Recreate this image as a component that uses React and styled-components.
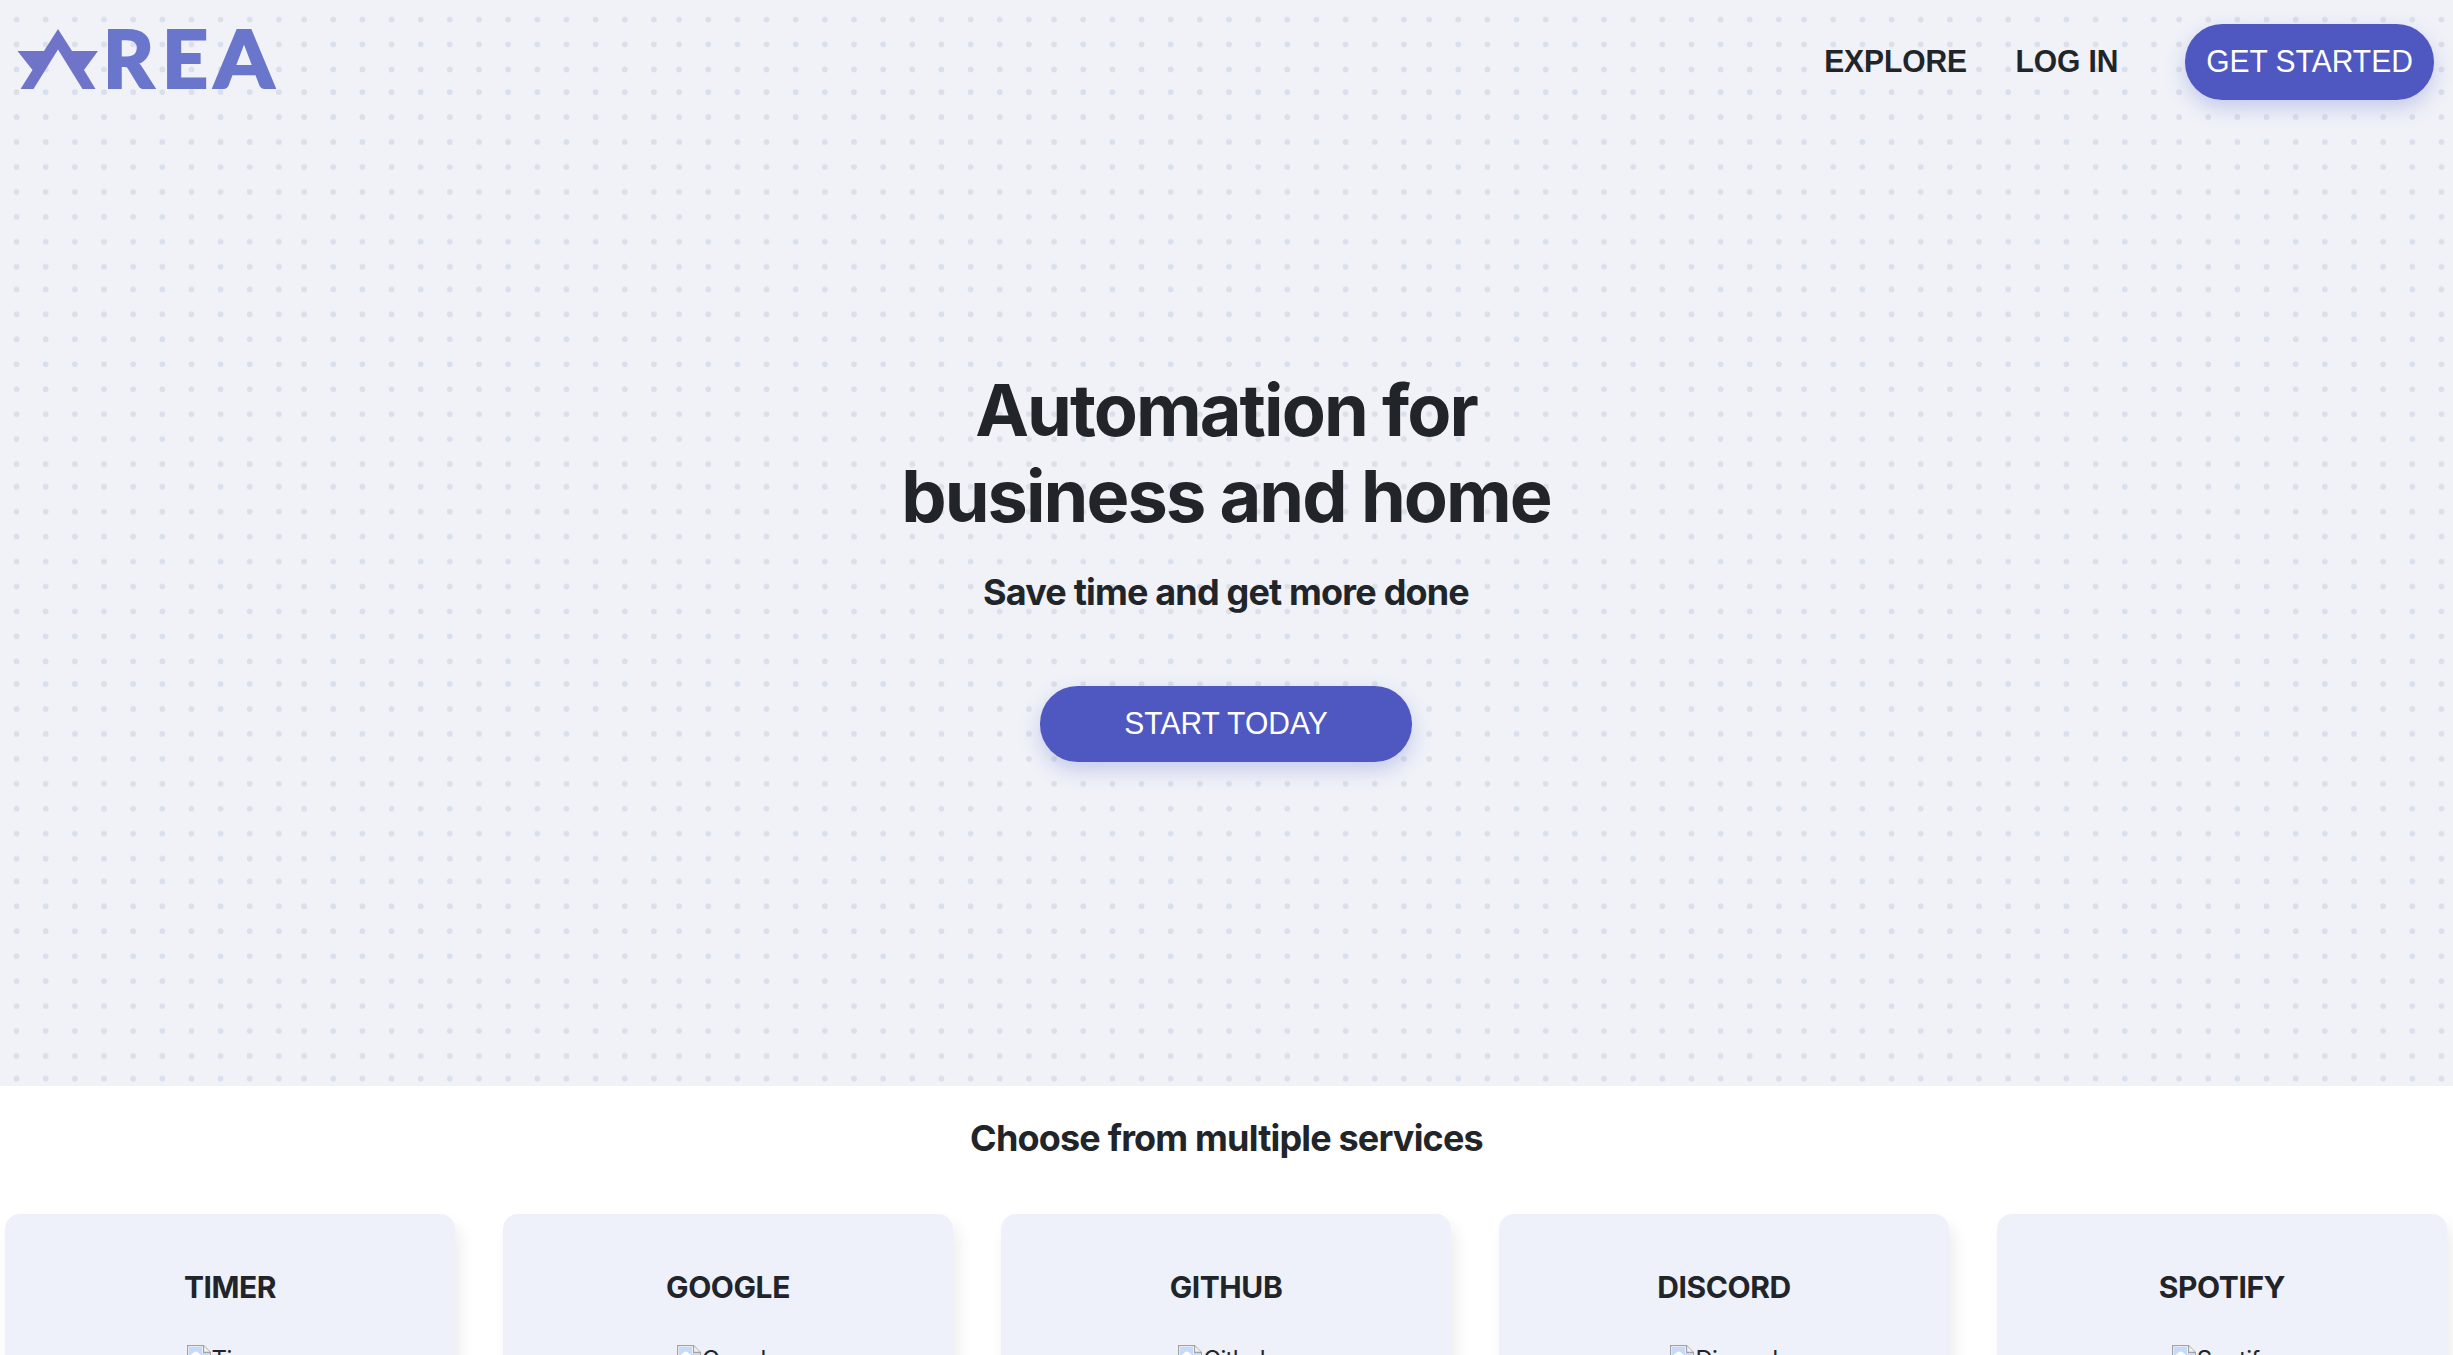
import React from 'react';
import styled, { createGlobalStyle } from 'styled-components';

const GlobalStyle = createGlobalStyle`
  *, *::before, *::after { box-sizing: border-box; }
  html, body { margin: 0; padding: 0; background: #fff; overflow: hidden; }
  body { color: #212529; font-family: Inter, "Liberation Sans", sans-serif; }
  h1, h2, h3 { margin: 0; }
`;

const Page = styled.div`
  height: 1355px;
  overflow: hidden;
  display: flex;
  flex-direction: column;
`;

const Hero = styled.section`
  position: relative;
  flex: 0 0 1086px;
  display: flex;
  flex-direction: column;
  background: #f0f2f8;
`;

const Backdrop = styled.svg`
  position: absolute;
  inset: 0;
  width: 100%;
  height: 100%;
`;

const Header = styled.header`
  position: relative;
  height: 124px;
  padding: 0 19px 0 17px;
  display: flex;
  align-items: center;
  justify-content: space-between;
`;

const Logo = styled.svg`
  width: 262px;
  height: 80px;
  overflow: visible;
  font: 900 80px Lato, sans-serif;
`;

const Nav = styled.nav`
  display: flex;
  align-items: center;
`;

const Label = styled.span`
  display: inline-block;
  transform: scaleY(1.06);
  transform-origin: 50% 78%;
`;

const NavLink = styled.a`
  font: 700 30px/36px "Liberation Sans", Arial, sans-serif;
  letter-spacing: -0.1px;
  color: #212529;
  margin-right: ${({ $gap }) => $gap}px;
`;

const PillButton = styled.button`
  width: ${({ $width }) => $width}px;
  height: 76px;
  padding: 0 0 1px;
  border: 0;
  border-radius: 37.5px;
  background: #4e58c0;
  color: #fff;
  font: 400 30px "Liberation Sans", Arial, sans-serif;
  white-space: nowrap;
  box-shadow: 0 8px 20px rgba(78, 88, 192, 0.26);
`;

const HeroContent = styled.div`
  position: relative;
  padding: 242.7px 1px 0 0;
  display: flex;
  flex-direction: column;
  align-items: center;
`;

const HeroTitle = styled.h1`
  font-size: 72px;
  font-weight: 700;
  letter-spacing: -0.0265em;
  line-height: 86.6px;
  text-align: center;
`;

const Subtitle = styled.h2`
  font-size: 36px;
  font-weight: 700;
  letter-spacing: -0.023em;
  line-height: 43.2px;
  text-align: center;
`;

const Tagline = styled(Subtitle)`
  margin: 31.5px 0 71.6px;
`;

const Services = styled.section`
  padding: 31px 5px 0;
`;

const CardRow = styled.div`
  display: flex;
  gap: 48px;
  margin-top: 53.8px;
`;

const Card = styled.article`
  flex: 0 0 450px;
  height: 420px;
  padding-top: 55px;
  border-radius: 15px;
  background: #eef1fa;
  box-shadow: 5px 10px 16px rgba(0, 0, 0, 0.08);
  display: flex;
  flex-direction: column;
  align-items: center;
`;

const CardTitle = styled.h3`
  font-size: 30px;
  font-weight: 700;
  letter-spacing: -0.014em;
  line-height: 36px;
`;

const MissingImage = styled.div`
  display: flex;
  align-items: flex-start;
  gap: 1px;
  margin-top: 40px;
  font-size: 24px;
  letter-spacing: -0.03em;
  line-height: 29px;
`;

const TILE = { width: 375, height: 197.3, columns: 13, rows: 8 };

const Dots = () => (
  <Backdrop aria-hidden="true">
    <defs>
      <pattern id="dots" x="-84" y="-117.3" width={TILE.width} height={TILE.height} patternUnits="userSpaceOnUse">
        {Array.from({ length: TILE.rows * TILE.columns }, (_, i) => {
          const column = i % TILE.columns;
          const row = Math.floor(i / TILE.columns);
          return (
            <circle
              key={i}
              cx={13.1 + column * 29.15}
              cy={12.1 + row * 24.95}
              r="2.85"
              fill={(row + column) % 3 ? '#dae0eb' : '#dcdee9'}
            />
          );
        })}
      </pattern>
    </defs>
    <rect width="100%" height="100%" fill="url(#dots)" />
  </Backdrop>
);

const AreaLogo = () => (
  <Logo viewBox="17 22 262 80" role="img" aria-label="AREA">
    <polygon
      fill="#6f74c9"
      points="58,29 72,51 98,51 84,70 95.5,89 82.5,89 58,49.5 33.5,89 20.5,89 32.5,70 17.5,51 44,51"
    />
    <g fill="#6a76cb" stroke="#6a76cb" strokeWidth="2">
      <text x="103" y="87.8" textLength="51" lengthAdjust="spacingAndGlyphs">R</text>
      <text x="162" y="87.8" textLength="46" lengthAdjust="spacingAndGlyphs">E</text>
      <text x="214" y="87.8" textLength="60" lengthAdjust="spacingAndGlyphs">A</text>
    </g>
  </Logo>
);

const BrokenImageIcon = () => (
  <svg width="24" height="24" viewBox="0 0 24 24" aria-hidden="true">
    <path d="M.6.6H16.5L23.4 7.5V23.4H.6Z" fill="#fff" stroke="#a3a3a3" strokeWidth="1.3" />
    <path d="M2 2H15V8.5H22V22H2Z" fill="#c6dafc" />
    <path d="M4 10.5a2 2 0 0 1 1.8-2 3.2 3.2 0 0 1 6 0 2 2 0 0 1 2 2Z" fill="#fff" />
    <path d="M16.5.6V7.5H23.4" fill="#f2f2f2" stroke="#a3a3a3" strokeWidth="1.3" />
  </svg>
);

const services = ['Timer', 'Google', 'Github', 'Discord', 'Spotify'];

export default function App() {
  return (
    <>
      <GlobalStyle />
      <Page>
        <Hero>
          <Dots />
          <Header>
            <AreaLogo />
            <Nav>
              <NavLink $gap={48.6}><Label>EXPLORE</Label></NavLink>
              <NavLink $gap={66.8}><Label>LOG IN</Label></NavLink>
              <PillButton $width={249}><Label>GET STARTED</Label></PillButton>
            </Nav>
          </Header>
          <HeroContent>
            <HeroTitle>
              Automation for
              <br />
              business and home
            </HeroTitle>
            <Tagline>Save time and get more done</Tagline>
            <PillButton $width={372}><Label>START TODAY</Label></PillButton>
          </HeroContent>
        </Hero>
        <Services>
          <Subtitle>Choose from multiple services</Subtitle>
          <CardRow>
            {services.map((name) => (
              <Card key={name}>
                <CardTitle>{name.toUpperCase()}</CardTitle>
                <MissingImage>
                  <BrokenImageIcon />
                  <span>{name}</span>
                </MissingImage>
              </Card>
            ))}
          </CardRow>
        </Services>
      </Page>
    </>
  );
}
